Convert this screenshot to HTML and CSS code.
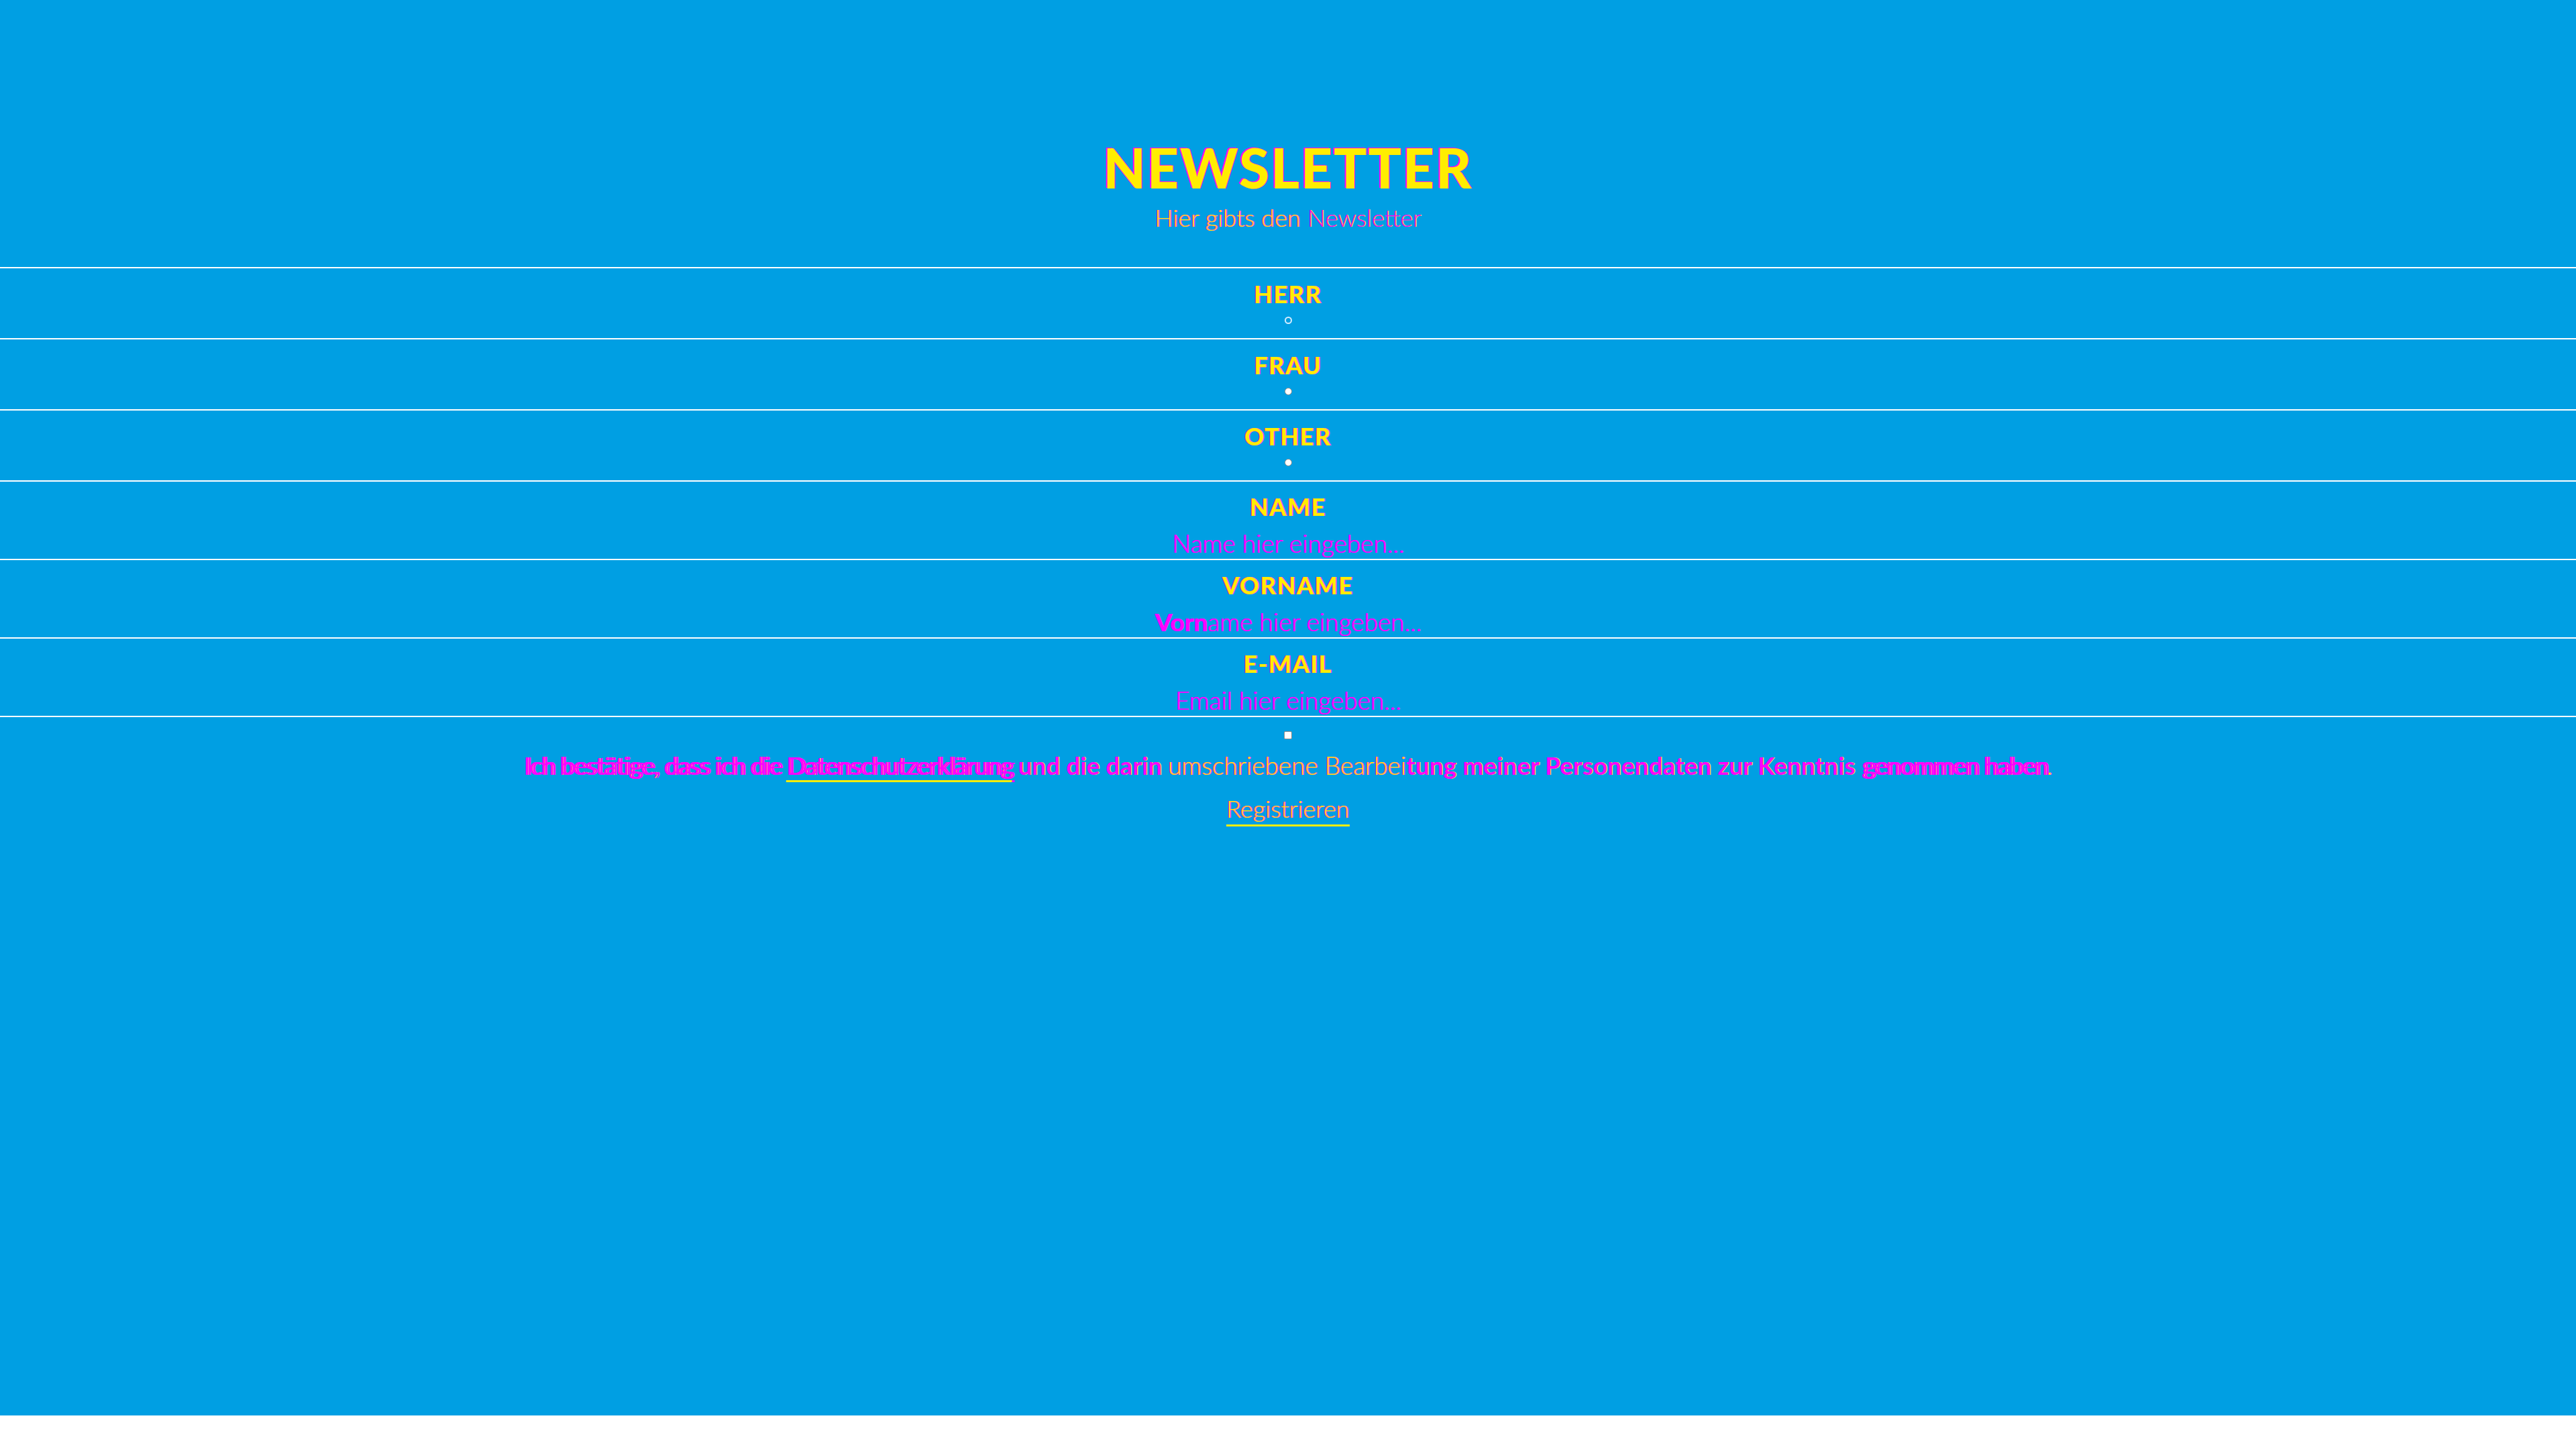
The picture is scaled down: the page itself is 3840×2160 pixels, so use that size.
FILE: index.html
```html
<!DOCTYPE html>
<html lang="de">
<head>
<meta charset="utf-8">
<title>Newsletter</title>
<link rel="stylesheet" href="styles.css">
</head>
<body>
<main class="page">
  <header class="hero">
    <h1 class="hero__title">NEWSLETTER</h1>
    <p class="hero__sub">Hier gibts den <span class="hero__sub-strong">Newsletter</span></p>
  </header>
  <form class="form">
    <div class="row row--radio">
      <label class="row__label">HERR</label>
      <span class="radio radio--focus"></span>
    </div>
    <div class="row row--radio">
      <label class="row__label">FRAU</label>
      <span class="radio"></span>
    </div>
    <div class="row row--radio">
      <label class="row__label">OTHER</label>
      <span class="radio"></span>
    </div>
    <div class="row row--field">
      <label class="row__label">NAME</label>
      <span class="row__placeholder">Name hier eingeben...</span>
    </div>
    <div class="row row--field">
      <label class="row__label">VORNAME</label>
      <span class="row__placeholder"><span class="strong">Vorn</span>ame hier eingeben...</span>
    </div>
    <div class="row row--field row--last">
      <label class="row__label">E-MAIL</label>
      <span class="row__placeholder">Email hier eingeben...</span>
    </div>
    <div class="consent">
      <span class="checkbox"></span>
      <p class="consent__text"><span class="glitch">Ich bestätige, dass ich die <a class="consent__link">Datenschutzerklärung</a></span><span class="bold"> und die darin </span><span class="thin">umschriebene Bearbei</span><span class="bold">tung meiner Personendaten zur Kenntnis </span><span class="glitch">genommen haben</span><span class="thin">.</span></p>
      <a class="submit">Registrieren</a>
    </div>
  </form>
</main>
</body>
</html>
```
FILE: styles.css
```css
html {
  background: #ffffff;
}
body {
  margin: 0;
  font-family: "Lato", "Open Sans", sans-serif;
}
.page {
  min-height: 2110px;
  background: #009fe3;
  display: flex;
  flex-direction: column;
  text-align: center;
}
.hero {
  display: flex;
  flex-direction: column;
  align-items: center;
  padding: 208px 0 56px;
}
.hero__title {
  margin: 0;
  font-size: 82px;
  line-height: 82px;
  font-weight: 900;
  color: #ffed00;
  letter-spacing: 2px;
  text-shadow: -2px -1px 0 #ff00ff, 1px 0 0 #ff00ff;
}
.hero__sub {
  margin: 16px 0 0;
  font-size: 36px;
  line-height: 36px;
  font-weight: 300;
  color: #ffed00;
  text-shadow: -1px 0 0 #ff00ff, 1px 0 0 #ff00ff;
}
.hero__sub-strong {
  color: #ff00ff;
  text-shadow: 1px 0 0 #ffed00;
}
.form {
  display: flex;
  flex-direction: column;
  align-items: stretch;
}
.row {
  display: flex;
  flex-direction: column;
  align-items: center;
  box-sizing: border-box;
  border-top: 2px solid #ffffff;
}
.row--radio {
  height: 106px;
  padding-top: 20px;
}
.row--field {
  height: 117px;
  padding-top: 19px;
}
.row--last {
  height: 119px;
  border-bottom: 2px solid #ffffff;
}
.row__label {
  font-size: 36px;
  line-height: 36px;
  font-weight: 900;
  letter-spacing: 1.5px;
  color: #ffed00;
  text-shadow: -1px 0 0 #ff00ff, 1px 0 0 #ff00ff;
}
.radio {
  margin-top: 16px;
  width: 11px;
  height: 11px;
  box-sizing: border-box;
  border-radius: 50%;
  background: #ffffff;
  border: 1px solid #8a8a8a;
}
.radio--focus {
  background: transparent;
  border: 2px solid #d4ecff;
}
.row__placeholder {
  margin-top: 18px;
  font-size: 37px;
  line-height: 37px;
  font-weight: 300;
  color: #ff00ff;
  text-shadow: 1px 0 0 #ff00ff;
}
.strong {
  font-weight: 700;
}
.consent {
  display: flex;
  flex-direction: column;
  align-items: center;
  padding-top: 21px;
}
.checkbox {
  width: 12px;
  height: 12px;
  box-sizing: border-box;
  background: #ffffff;
  border: 1px solid #8a8a8a;
  border-radius: 2px;
}
.consent__text {
  margin: 20px 0 0;
  font-size: 37px;
  line-height: 37px;
  color: #ff00ff;
  white-space: nowrap;
}
.glitch {
  font-weight: 400;
  text-shadow: 4px 0 0 #ff00ff, 1px 0 0 #ffed00;
  letter-spacing: -1px;
}
.bold {
  font-weight: 700;
  text-shadow: 1px 0 0 #ffed00;
}
.thin {
  font-weight: 300;
  color: #ffed00;
  text-shadow: -1px 0 0 #ff00ff, 1px 0 0 #ff00ff;
}
.consent__link {
  color: #ff00ff;
  text-decoration: underline;
  text-decoration-color: #ffed00;
  text-decoration-thickness: 3px;
  text-underline-offset: 8px;
}
.submit {
  margin-top: 28px;
  padding-bottom: 6px;
  font-size: 36px;
  line-height: 36px;
  font-weight: 300;
  color: #ffed00;
  text-shadow: -1px 0 0 #ff00ff, 1px 0 0 #ff00ff;
  border-bottom: 3px solid #ffed00;
}
```
